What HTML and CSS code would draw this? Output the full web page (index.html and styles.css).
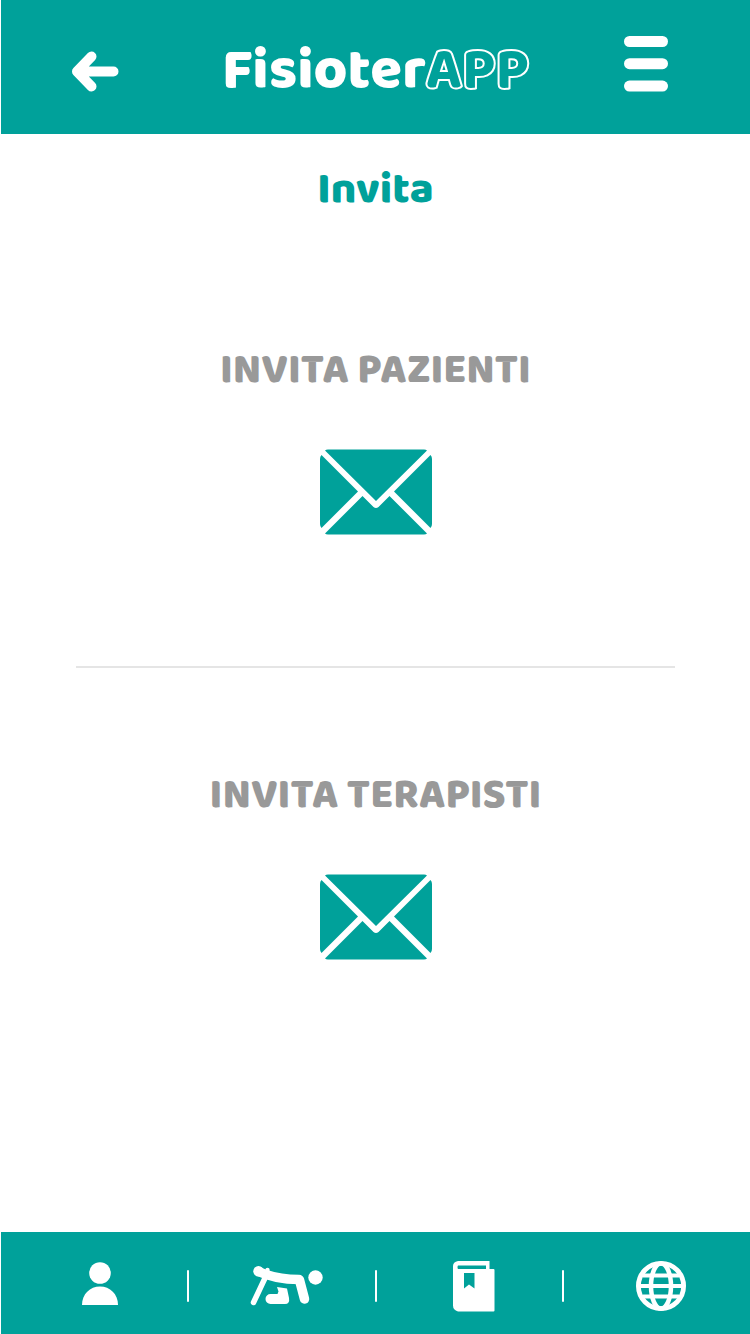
FILE: index.html
```
<!DOCTYPE html>
<html lang="it">
<head>
<meta charset="utf-8">
<meta name="viewport" content="width=device-width, initial-scale=1">
<title>FisioterAPP - Invita</title>
<link rel="stylesheet" href="styles.css">
</head>
<body>
<div class="app">
  <header class="topbar">
    <button class="icon-button back" type="button" aria-label="Indietro">
      <svg width="48" height="42" viewBox="0 0 48 42" fill="none" stroke="#fff" stroke-width="10" stroke-linecap="round" stroke-linejoin="round"><path d="M20.500 5.500 6 20.500 20.500 35.500M7 20.500H42.500"/><path d="M16 13.500 8 20.500l8 7z" fill="#fff" stroke="none"/></svg>
    </button>
    <div class="logo">Fisioter<span class="logo-outline">APP</span></div>
    <button class="icon-button menu" type="button" aria-label="Menu">
      <svg width="44" height="56" viewBox="0 0 44 56" fill="#fff"><rect width="44" height="11" rx="5.500"/><rect y="22.200" width="44" height="11" rx="5.500"/><rect y="44.600" width="44" height="11" rx="5.500"/></svg>
    </button>
  </header>

  <main class="content">
    <h1 class="title">Invita</h1>
    <section class="invite">
      <h2 class="invite-title" id="pazienti">INVITA PAZIENTI</h2>
      <button class="icon-button" type="button" aria-labelledby="pazienti">
        <svg width="112" height="86" viewBox="0 0 112 86" fill="#00a19a"><path d="M8 .5H104Q106 .5 107 1.500L56 52 5 1.500Q6 .5 8 .5zM1.500 6 38 42.500 1.500 79Q0 77.500 0 75V10Q0 7.500 1.500 6zM110.500 6 74 42.500 110.500 79Q112 77.500 112 75V10Q112 7.500 110.500 6zM42.500 47 53.500 58Q56 60 58.500 58L69.500 47 107 84.500Q106 85.500 104 85.500H8Q6 85.500 5 84.500z"/></svg>
      </button>
    </section>
    <hr class="separator">
    <section class="invite">
      <h2 class="invite-title" id="terapisti">INVITA TERAPISTI</h2>
      <button class="icon-button" type="button" aria-labelledby="terapisti">
        <svg width="112" height="86" viewBox="0 0 112 86" fill="#00a19a"><path d="M8 .5H104Q106 .5 107 1.500L56 52 5 1.500Q6 .5 8 .5zM1.500 6 38 42.500 1.500 79Q0 77.500 0 75V10Q0 7.500 1.500 6zM110.500 6 74 42.500 110.500 79Q112 77.500 112 75V10Q112 7.500 110.500 6zM42.500 47 53.500 58Q56 60 58.500 58L69.500 47 107 84.500Q106 85.500 104 85.500H8Q6 85.500 5 84.500z"/></svg>
      </button>
    </section>
  </main>

  <nav class="tabs" aria-label="Principale">
    <a class="tab" href="#profilo" aria-label="Profilo">
      <svg width="36" height="48" viewBox="0 0 36 48" fill="#fff"><circle cx="18" cy="11" r="10.800"/><path d="M0 43C0 32 8 24.500 18 24.500S36 32 36 43z"/></svg>
    </a>
    <a class="tab" href="#esercizi" aria-label="Esercizi">
      <svg width="74" height="42" viewBox="0 0 74 42" fill="none" stroke="#fff" stroke-linecap="round" stroke-linejoin="round"><path d="M3.500 37.500 15.500 12" stroke-width="5.500"/><path d="M8.500 6.500C18 11 32 14.500 49 14.500" stroke-width="9.500"/><path d="M49.500 15 54.500 34" stroke-width="9.500"/><circle cx="8.500" cy="6.200" r="5.200" fill="#fff" stroke="none"/><circle cx="17.500" cy="5" r="2.200" fill="#fff" stroke="none"/><circle cx="65.500" cy="12.500" r="7.200" fill="#fff" stroke="none"/><path d="M27 22 37 23.500 39 33Q40 39 35 39H20.500A5 5 0 0 1 20.500 29H27.500L28.500 26.500z" fill="#fff" stroke="none"/></svg>
    </a>
    <a class="tab" href="#diario" aria-label="Diario">
      <svg width="42" height="52" viewBox="0 0 42 52" fill="#fff" fill-rule="evenodd"><path d="M5 1H36.500V9H40.500Q41.500 9 41.500 10V50.500Q41.500 51.500 40.500 51.500H5Q0 50 0 45.500V6Q0 2 5 1zM5 5.500Q4 7 5 9H33V5.500zM11 13V28.500L16 24.500 21.500 28.500V13z"/></svg>
    </a>
    <a class="tab" href="#sito" aria-label="Sito web">
      <svg width="50" height="52" viewBox="0 0 50 52" fill="none" stroke="#fff" stroke-width="4.800"><circle cx="25" cy="26" r="22.600"/><ellipse cx="25" cy="26" rx="10" ry="22.600" stroke-width="4.500"/><path d="M7 15.500H43M3 26H47M7 36.500H43" stroke-width="4.200"/></svg>
    </a>
  </nav>
</div>
</body>
</html>
```
FILE: styles.css
```
* {
  box-sizing: border-box;
}

body {
  margin: 0;
  background: #fff;
  font-family: "Baloo 2", Baloo, "Noto Sans", sans-serif;
}

.app {
  display: flex;
  flex-direction: column;
  min-height: 100vh;
  padding-left: 1px;
}

.icon-button {
  display: block;
  padding: 0;
  border: 0;
  background: none;
  cursor: pointer;
}

svg {
  display: block;
}

.topbar {
  display: grid;
  grid-template-columns: 1fr auto 1fr;
  align-items: center;
  padding: 4px 82px 0 70px;
  height: 134px;
  background: #00a19a;
}

.back {
  padding-top: 6px;
}

.menu {
  justify-self: end;
  padding-bottom: 10px;
}

.logo {
  padding: 4px 0 0 12px;
  font-size: 58px;
  line-height: 68px;
  font-weight: 800;
  color: #fff;
}

.logo-outline {
  font-weight: 700;
  color: #00a19a;
  -webkit-text-stroke: 4px #fff;
  paint-order: stroke fill;
}

.content {
  flex: 1;
  display: flex;
  flex-direction: column;
}

.title {
  margin: 30px 0 0;
  font-size: 44px;
  line-height: 52px;
  font-weight: 800;
  text-align: center;
  color: #00a19a;
}

.invite {
  display: flex;
  flex-direction: column;
  align-items: center;
  gap: 52px;
  padding-top: 102px;
}

.title + .invite {
  padding-top: 129px;
}

.invite-title {
  margin: 0;
  font-size: 42px;
  line-height: 52px;
  font-weight: 800;
  color: #999;
}

.separator {
  width: 80%;
  height: 2px;
  margin: 131px auto 0;
  border: 0;
  background: #e5e5e5;
}

.tabs {
  display: flex;
  height: 102px;
  background: #00a19a;
}

.tab {
  position: relative;
  flex: 1;
  display: flex;
  align-items: center;
  justify-content: center;
  padding: 5px 0 0 10px;
}

.tab:not(:last-child)::after {
  content: "";
  position: absolute;
  right: -1px;
  top: 38px;
  width: 2px;
  height: 32px;
  border-radius: 1px;
  background: #fff;
}
```
